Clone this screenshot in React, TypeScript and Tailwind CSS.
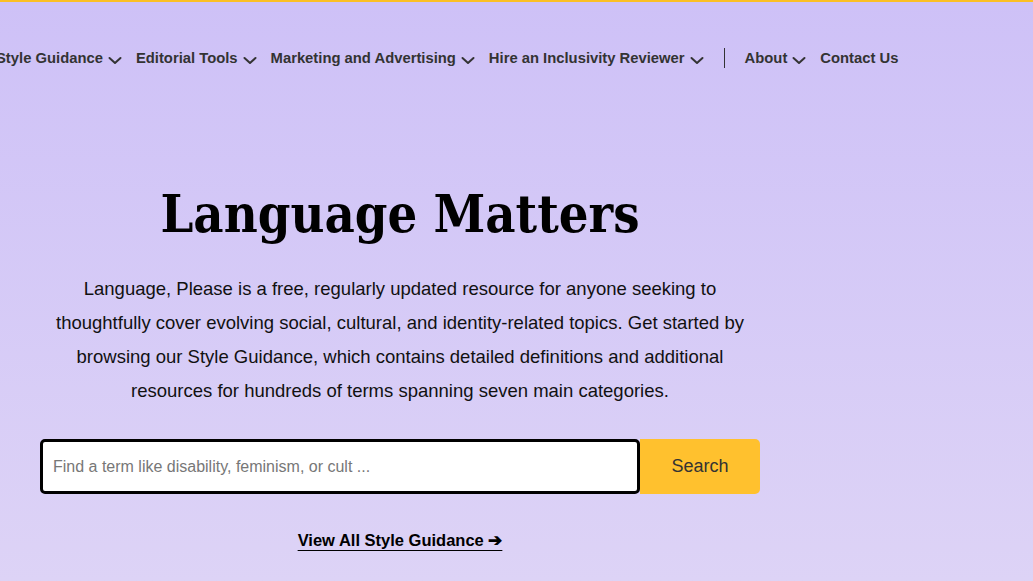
import React from "react";

const Chevron = () => (
  <svg width="14" height="9" viewBox="0 0 14 9" className="ml-[5px] mt-[5px]" fill="none">
    <path d="M1.5 2 L7 7 L12.5 2" stroke="#333" strokeWidth="2" strokeLinecap="round" strokeLinejoin="round" />
  </svg>
);

const NavItem = ({ label, chevron = true }: { label: string; chevron?: boolean }) => (
  <div className="flex items-center">
    <span>{label}</span>
    {chevron && <Chevron />}
  </div>
);

export default function App() {
  return (
    <div className="w-[1033px] h-[581px] overflow-hidden border-t-2 border-[#fbbf24] bg-gradient-to-b from-[#cec1f7] to-[#ddd3f6]" style={{ fontFamily: '"Liberation Sans", Arial, sans-serif' }}>
      <nav className="flex items-center h-[112px] ml-[-4px] text-[14.8px] font-bold text-[#333]">
        <div className="flex items-center gap-[14px]">
          <NavItem label="Style Guidance" />
          <NavItem label="Editorial Tools" />
          <NavItem label="Marketing and Advertising" />
          <NavItem label="Hire an Inclusivity Reviewer" />
        </div>
        <div className="w-px h-[20px] bg-[#333] mx-[20px]" />
        <div className="flex items-center gap-[14px]">
          <NavItem label="About" />
          <NavItem label="Contact Us" chevron={false} />
        </div>
      </nav>
      <main className="w-[720px] ml-[40px] flex flex-col items-center">
        <h1 className="mt-[68px] text-[52px] leading-[64px] font-bold text-black" style={{ fontFamily: '"DejaVu Serif Condensed", "DejaVu Serif", serif' }}>
          Language Matters
        </h1>
        <p className="mt-[26px] text-[18.5px] leading-[34px] text-[#111] text-center">
          Language, Please is a free, regularly updated resource for anyone seeking to<br />
          thoughtfully cover evolving social, cultural, and identity-related topics. Get started by<br />
          browsing our Style Guidance, which contains detailed definitions and additional<br />
          resources for hundreds of terms spanning seven main categories.
        </p>
        <div className="mt-[31px] flex w-full h-[55px]">
          <input
            className="flex-1 h-full bg-white border-[3px] border-black rounded-[5px] px-[10px] text-[16px] outline-none placeholder:text-[#777]"
            placeholder="Find a term like disability, feminism, or cult ..."
          />
          <button className="w-[120px] h-full bg-[#ffc12e] rounded-r-[5px] text-[18px] text-[#333]">Search</button>
        </div>
        <a className="mt-[34px] text-[16.5px] font-bold text-black underline underline-offset-[4px]">
          View All Style Guidance ➔
        </a>
      </main>
    </div>
  );
}
